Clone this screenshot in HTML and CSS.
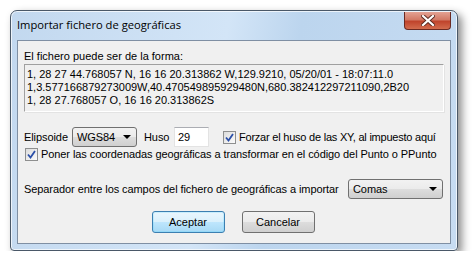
FILE: index.html
```
<!DOCTYPE html>
<html lang="es">
<head>
  <meta charset="UTF-8" />
  <title>Importar fichero de geográficas</title>
  <link rel="stylesheet" href="styles.css">
</head>
<body>
  <div class="window">
    <div class="titlebar">
      <span class="title">Importar fichero de geográficas</span>
      <span class="close">
        <svg width="14" height="11" viewBox="0 0 14 11">
          <path d="M2 1 L12 10 M12 1 L2 10" stroke="#5a2a20" stroke-width="4" stroke-linecap="square"/>
          <path d="M2 1 L12 10 M12 1 L2 10" stroke="#ffffff" stroke-width="2.2" stroke-linecap="square"/>
        </svg>
      </span>
    </div>

    <div class="client">
      <div class="caption">El fichero puede ser de la forma:</div>
      <div class="sample">
        1, 28 27 44.768057 N, 16 16 20.313862 W,129.9210, 05/20/01 - 18:07:11.0<br>
        1,3.577166879273009W,40.470549895929480N,680.382412297211090,2B20<br>
        1, 28 27.768057 O, 16 16 20.313862S
      </div>

      <!-- Elipsoide / huso -->
      <div class="row row-1">
        <span class="lbl-elip">Elipsoide</span>
        <span class="combo combo-small">WGS84 <i class="arrow"></i></span>
        <span class="lbl-huso">Huso</span>
        <span class="edit">29</span>
        <span class="check"><svg width="9" height="9" viewBox="0 0 9 9"><path d="M1 4.5 L3.5 7.5 L8 1" fill="none" stroke="#2b4fa8" stroke-width="1.8"/></svg></span>
        <span class="lbl-forzar">Forzar el huso de las XY, al impuesto aquí</span>
      </div>

      <div class="row row-2">
        <span class="check"><svg width="9" height="9" viewBox="0 0 9 9"><path d="M1 4.5 L3.5 7.5 L8 1" fill="none" stroke="#2b4fa8" stroke-width="1.8"/></svg></span>
        <span>Poner las coordenadas geográficas a transformar en el código del Punto o PPunto</span>
      </div>

      <div class="row row-3">
        <span>Separador entre los campos del fichero de geográficas a importar</span>
        <span class="combo combo-wide">Comas <i class="arrow"></i></span>
      </div>

      <div class="buttons">
        <span class="btn btn-default">Aceptar</span>
        <span class="btn">Cancelar</span>
      </div>
    </div>
  </div>
</body>
</html>
```
FILE: styles.css
```
body {
  margin: 0;
  background: #ffffff;
  font-family: "Liberation Sans", Arial, sans-serif;
  font-size: 11px;
  color: #000;
  white-space: nowrap;
}
.window {
  margin: 10px 0 0 10px;
  width: 448px;
  height: 241px;
  box-sizing: border-box;
  border: 1px solid #4a5868;
  border-radius: 7px 7px 4px 4px;
  background: linear-gradient(100deg, #c2d8ef 0%, #d3e5f7 45%, #bcd5ee 60%, #c7dcf2 100%);
  box-shadow: 4px 4px 9px rgba(0,0,0,0.45), inset 0 0 0 1px rgba(255,255,255,0.7);
  padding: 0 6px 6px 6px;
}
.titlebar {
  height: 29px;
  display: flex;
  justify-content: space-between;
  align-items: flex-start;
}
.title {
  font-family: "Open Sans", "Liberation Sans", sans-serif;
  font-size: 11.2px;
  margin-top: 6px;
  color: #000;
}
.close {
  width: 45px;
  height: 17px;
  margin-top: 1px;
  border: 1px solid #6b2a22;
  border-top: none;
  border-radius: 0 0 4px 4px;
  background: linear-gradient(#e3a293 0%, #d27a66 45%, #c0442c 55%, #d26c4e 100%);
  display: flex;
  align-items: center;
  justify-content: center;
}
.client {
  height: 204px;
  box-sizing: border-box;
  border: 1px solid #7f8fa3;
  background: #f0f0f0;
  padding: 8px 6px 0 6px;
}
.caption {
  height: 15px;
  padding-top: 1px;
  box-sizing: border-box;
}
.sample {
  height: 48px;
  box-sizing: border-box;
  border: 1px solid #a0a0a0;
  border-right-color: #ffffff;
  border-bottom-color: #ffffff;
  box-shadow: 1px 1px 0 #e3e3e3;
  padding: 3px 2px;
  line-height: 13px;
  overflow: hidden;
}
.row {
  display: flex;
  align-items: center;
  letter-spacing: -0.08px;
}
.row-1 {
  margin-top: 15px;
  height: 20px;
}
.row-2 {
  margin-top: -1px;
  height: 16px;
}
.row-3 {
  margin-top: 16px;
  height: 21px;
  justify-content: space-between;
}
.lbl-elip {
  width: 43px;
}
.lbl-huso {
  width: 25px;
  margin-left: 7px;
}
.lbl-forzar {
  letter-spacing: -0.22px;
}
.combo {
  box-sizing: border-box;
  height: 20px;
  border: 1px solid #707070;
  border-radius: 3px;
  background: linear-gradient(#f2f2f2 0%, #ebebeb 50%, #dddddd 51%, #cfcfcf 100%);
  display: flex;
  align-items: center;
  justify-content: space-between;
  padding: 0 5px 0 4px;
}
.combo-small {
  width: 65px;
  margin-left: 5px;
}
.combo-wide {
  width: 95px;
  margin-right: 1px;
}
.arrow {
  width: 0;
  height: 0;
  border-left: 4px solid transparent;
  border-right: 4px solid transparent;
  border-top: 4px solid #000;
}
.edit {
  box-sizing: border-box;
  width: 35px;
  height: 20px;
  margin-left: 5px;
  background: #fff;
  border: 1px solid #e3e3e3;
  border-top-color: #abadb3;
  padding: 3px 3px;
}
.check {
  box-sizing: border-box;
  width: 13px;
  height: 13px;
  border: 1px solid #8e8f8f;
  background: linear-gradient(135deg, #dcdcdc, #fbfbfb);
  display: inline-flex;
  align-items: center;
  justify-content: center;
  margin-right: 3px;
}
.row-1 .check {
  margin-left: 14px;
}
.row-2 .check {
  margin-left: 1px;
}
.buttons {
  display: flex;
  justify-content: center;
  gap: 17px;
  margin-top: 12px;
  padding-right: 2px;
}
.btn {
  box-sizing: border-box;
  width: 73px;
  height: 22px;
  border: 1px solid #707070;
  border-radius: 3px;
  background: linear-gradient(#f2f2f2 0%, #ebebeb 50%, #dddddd 51%, #cfcfcf 100%);
  display: flex;
  align-items: center;
  justify-content: center;
}
.btn-default {
  border-color: #3c7fb1;
  background: linear-gradient(#eaf6fd 0%, #d9f0fc 50%, #bee6fd 51%, #a7d9f5 100%);
  box-shadow: inset 0 0 0 1px #48d4fe33;
}
```
